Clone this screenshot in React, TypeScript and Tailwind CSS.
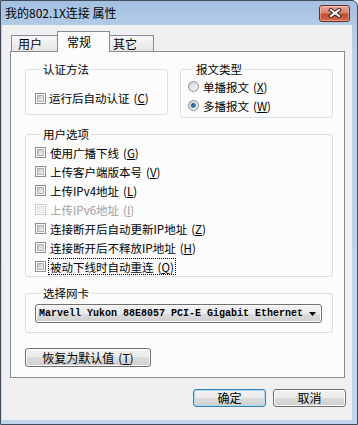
import type { ReactNode } from 'react';

function CheckBox({ disabled = false }: { disabled?: boolean }) {
  return (
    <span
      className={`flex h-[11px] w-[11px] shrink-0 items-center justify-center border bg-white ${
        disabled ? 'border-[#cacaca]' : 'border-[#8f8f8f]'
      }`}
    >
      <span
        className={`h-[7px] w-[7px] border bg-gradient-to-br ${
          disabled
            ? 'border-[#e0e0e0] from-[#e8e8e8] to-[#f8f8f8]'
            : 'border-[#aeb3b9] from-[#c3c7cc] to-[#f0f1f3]'
        }`}
      />
    </span>
  );
}

function Radio({ checked = false }: { checked?: boolean }) {
  return (
    <span className="flex h-[11px] w-[11px] shrink-0 items-center justify-center rounded-full border border-[#8c8c8c] bg-gradient-to-br from-[#cfd2d6] to-[#fafafa]">
      {checked && <span className="h-[5px] w-[5px] rounded-full bg-gradient-to-br from-[#0b426f] to-[#5ea6dd]" />}
    </span>
  );
}

function Key({ k }: { k: string }) {
  return (
    <span className="ml-[4px]">
      (<u>{k}</u>)
    </span>
  );
}

function CheckRow({
  text,
  k,
  disabled = false,
  focused = false,
}: {
  text: string;
  k: string;
  disabled?: boolean;
  focused?: boolean;
}) {
  return (
    <div className="flex h-[19px] items-center">
      <CheckBox disabled={disabled} />
      <span
        className={`ml-[2px] flex h-[17px] items-center border px-[1px] text-[11.5px] leading-[14px] ${
          focused ? 'border-dotted border-black' : 'border-transparent'
        } ${disabled ? 'text-[#a0a0a0]' : 'text-black'}`}
      >
        {text}
        <Key k={k} />
      </span>
    </div>
  );
}

function Group({ title, className = '', children }: { title: string; className?: string; children: ReactNode }) {
  return (
    <fieldset className={`rounded-[3px] border border-[#d5dfe5] ${className}`}>
      <legend className="ml-[6px] px-[2px] text-[11.5px] leading-[14px] text-black">{title}</legend>
      {children}
    </fieldset>
  );
}

function Button({ children, className = '', primary = false }: { children: ReactNode; className?: string; primary?: boolean }) {
  return (
    <div
      className={`flex items-center justify-center rounded-[3px] border bg-[linear-gradient(#f2f2f2,#ebebeb_50%,#dddddd_50%,#cfcfcf)] text-[12px] leading-none text-black ${
        primary
          ? 'border-[#3c7fb1] shadow-[inset_0_0_0_1px_#a6dcf6]'
          : 'border-[#707070] shadow-[inset_0_0_0_1px_#fcfcfc]'
      } ${className}`}
    >
      {children}
    </div>
  );
}

export default function App() {
  return (
    <div className="flex h-[425px] w-[358px] flex-col rounded-tr-[6px] border border-[#3f4c5c] bg-[linear-gradient(#a5c1e1,#b9d0ea_40px,#c2d7ee)] pb-[4px] pl-[1px] pr-[5px] font-['Noto_Sans_CJK_SC',sans-serif]">
      {/* 标题栏 */}
      <div className="flex h-[24px] shrink-0 items-center pl-[3px]">
        <span className="text-[12px] leading-none text-black">我的802.1X连接 属性</span>
        <div className="ml-auto mr-[2px] flex h-[17px] w-[31px] items-center justify-center rounded-[3px] border border-[#6a2b20] bg-[linear-gradient(#e9a896,#d6826d_45%,#c44a2f_55%,#d26b4f)] shadow-[inset_0_0_0_1px_rgba(255,255,255,0.35)]">
          <svg width="14" height="10" viewBox="0 0 14 10">
            <path d="M3 2 L11 8 M11 2 L3 8" stroke="#3a211c" strokeWidth="4" strokeLinecap="square" />
            <path d="M3 2 L11 8 M11 2 L3 8" stroke="#ffffff" strokeWidth="2" strokeLinecap="square" />
          </svg>
        </div>
      </div>

      {/* 客户区 */}
      <div className="flex flex-1 flex-col bg-[#f0f0f0] pt-[6px]">
        {/* 选项卡 */}
        <div className="relative z-10 -mb-px flex items-end pl-[9px] text-[12px] leading-none text-black">
          <div className="mb-px flex h-[16px] w-[48px] items-center border border-b-0 border-[#898c95] bg-[linear-gradient(#f6f6f6,#e6e6e6)] pl-[6px]">
            用户
          </div>
          <div className="relative z-10 -mx-[2px] flex h-[21px] w-[53px] items-start border border-b-0 border-[#898c95] bg-[#fcfcfc] pl-[9px] pt-[4px]">
            常规
          </div>
          <div className="mb-px flex h-[16px] w-[46px] items-center border border-b-0 border-[#898c95] bg-[linear-gradient(#f6f6f6,#e6e6e6)] pl-[4px]">
            其它
          </div>
        </div>

        {/* 选项卡面板 */}
        <div className="ml-[8px] mr-[7px] border border-[#898c95] bg-[#fcfcfc] pb-[10px] pl-[14px] pr-[11px] pt-[10px]">
          <div className="flex items-start gap-[12px]">
            <Group title="认证方法" className="h-[53px] w-[143px] pl-[9px] pt-[15px]">
              <div className="flex h-[14px] items-center">
                <CheckBox />
                <span className="ml-[3px] text-[11.5px] leading-[14px] text-black">
                  运行后自动认证
                  <Key k="C" />
                </span>
              </div>
            </Group>
            <Group title="报文类型" className="h-[56px] flex-1 pl-[7px] pt-[1px]">
              <div className="flex h-[19px] items-center">
                <Radio />
                <span className="ml-[4px] text-[11.5px] leading-[14px] text-black">
                  单播报文
                  <Key k="X" />
                </span>
              </div>
              <div className="flex h-[19px] items-center">
                <Radio checked />
                <span className="ml-[4px] text-[11.5px] leading-[14px] text-black">
                  多播报文
                  <Key k="W" />
                </span>
              </div>
            </Group>
          </div>

          <Group title="用户选项" className="mt-[9px] pl-[9px] pt-[2px]">
            <CheckRow text="使用广播下线" k="G" />
            <CheckRow text="上传客户端版本号" k="V" />
            <CheckRow text="上传IPv4地址" k="L" />
            <CheckRow text="上传IPv6地址" k="I" disabled />
            <CheckRow text="连接断开后自动更新IP地址" k="Z" />
            <CheckRow text="连接断开后不释放IP地址" k="H" />
            <CheckRow text="被动下线时自动重连" k="Q" focused />
          </Group>

          <Group title="选择网卡" className="mt-[9px] pb-[9px] pl-[9px] pr-[10px] pt-[4px]">
            <div className="flex h-[19px] items-center rounded-[3px] border border-[#707070] bg-[linear-gradient(#f2f2f2,#ebebeb_50%,#dddddd_50%,#cfcfcf)] pl-[3px] pr-[5px] shadow-[inset_0_0_0_1px_#fcfcfc]">
              <span className="font-['Liberation_Mono',monospace] text-[10px] font-bold leading-none text-black">
                Marvell Yukon 88E8057 PCI-E Gigabit Ethernet
              </span>
              <svg className="ml-auto" width="7" height="4" viewBox="0 0 7 4">
                <path d="M0 0 H7 L3.5 4 Z" fill="#000" />
              </svg>
            </div>
          </Group>

          <Button className="mt-[15px] h-[19px] w-[126px]">
            恢复为默认值
            <Key k="T" />
          </Button>
        </div>

        {/* 底部按钮 */}
        <div className="mt-[11px] flex justify-end gap-[7px] pr-[6px]">
          <Button primary className="h-[18px] w-[73px]">
            确定
          </Button>
          <Button className="h-[18px] w-[73px]">取消</Button>
        </div>
      </div>
    </div>
  );
}
